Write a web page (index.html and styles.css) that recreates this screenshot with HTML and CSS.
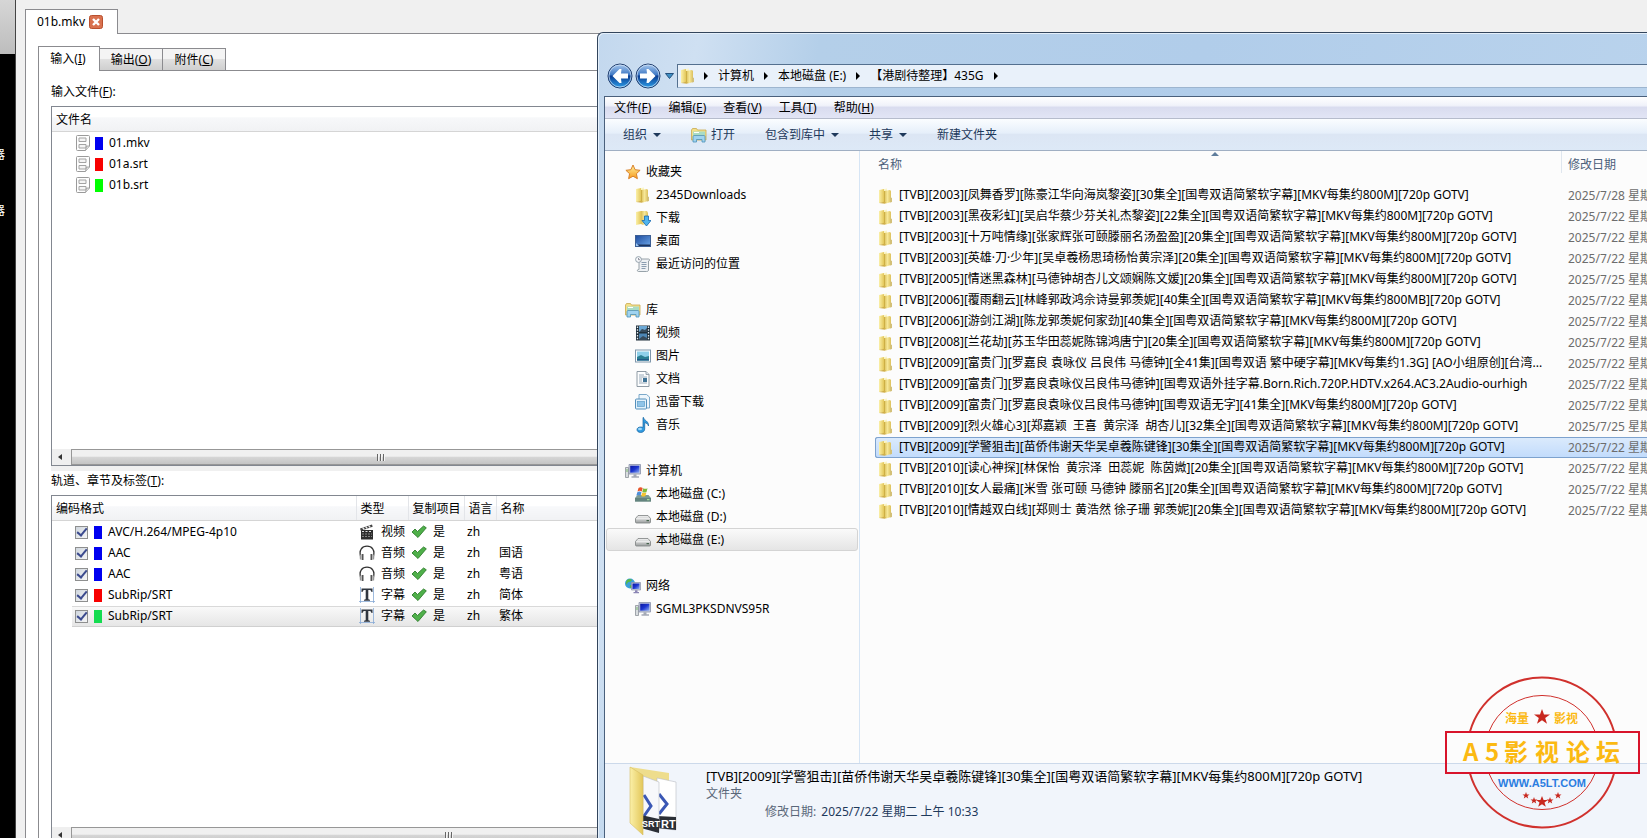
FILE: index.html
```
<!DOCTYPE html>
<html lang="zh-CN">
<head>
    <meta charset="UTF-8">
    <meta name="viewport" content="width=device-width, initial-scale=1.0">
    <title>01b.mkv</title>
    <link rel="stylesheet" href="styles.css">
</head>
<body>
    <!-- shared icons -->
    <svg class="defs" aria-hidden="true">
        <defs>
            <linearGradient id="g-fold" x1="0" x2="1"><stop offset="0" stop-color="#fbf0a8"/><stop offset="1" stop-color="#e3c75a"/></linearGradient>
            <linearGradient id="g-front" x1="0" x2="1"><stop offset="0" stop-color="#d9bd55"/><stop offset=".5" stop-color="#f6e798"/><stop offset="1" stop-color="#dcc05c"/></linearGradient>
            <linearGradient id="g-nav" x1="0" y1="0" x2="0" y2="1"><stop offset="0" stop-color="#a9c9ee"/><stop offset=".45" stop-color="#3f78c4"/><stop offset=".5" stop-color="#0b3d92"/><stop offset="1" stop-color="#2ea0ea"/></linearGradient>
            <linearGradient id="g-screen" x1="0" y1="0" x2="1" y2="1"><stop offset="0" stop-color="#0a17a0"/><stop offset=".5" stop-color="#1c35cf"/><stop offset="1" stop-color="#8fb0f5"/></linearGradient>
            <linearGradient id="g-desk" x1="0" y1="0" x2="1" y2="1"><stop offset="0" stop-color="#1d4a9c"/><stop offset="1" stop-color="#6ea8ea"/></linearGradient>
            <linearGradient id="g-star" x1="0" y1="0" x2="0" y2="1"><stop offset="0" stop-color="#fff3a0"/><stop offset="1" stop-color="#f79a1c"/></linearGradient>
            <linearGradient id="g-drive" x1="0" y1="0" x2="0" y2="1"><stop offset="0" stop-color="#f4f4f4"/><stop offset="1" stop-color="#9b9f9f"/></linearGradient>
        </defs>
        <symbol id="i-folder" viewBox="0 0 16 16">
            <path d="M1 2l5-1v13l-5 1z" fill="url(#g-fold)"/>
            <path d="M6 1l3-.5v3L6 4z" fill="#fbf5c8"/>
            <path d="M6 3l6-1 1 1v11l-5 1.500-2-1z" fill="url(#g-front)"/>
            <path d="M1 15l6 .8 1-1-2-1z" fill="#cfae48"/>
            <path d="M12 9l2 1v4l-2 .5z" fill="#d3c078"/>
            <path d="M6.500 3v11" stroke="#c9a93f" stroke-width=".8"/>
        </symbol>
        <symbol id="i-down" viewBox="0 0 16 16">
            <path d="M1 2l5-1v13l-5 1z" fill="url(#g-fold)"/>
            <path d="M6 1l6 0 1 2v10l-5 2-2-1z" fill="url(#g-front)"/>
            <path d="M9.500 6h4v4.500H16L11.500 16 7 10.500h2.500z" fill="#4fb4ee" stroke="#1568b0" stroke-width=".8"/>
        </symbol>
        <symbol id="i-star" viewBox="0 0 16 16">
            <path d="M8 1l2.100 4.700 5 .6-3.700 3.400 1 5L8 12.200 3.600 14.700l1-5L.9 6.300l5-.6z" fill="url(#g-star)" stroke="#d9822b" stroke-width="1"/>
        </symbol>
        <symbol id="i-desktop" viewBox="0 0 16 16">
            <rect x=".5" y="2.500" width="15" height="11" fill="url(#g-desk)" stroke="#3d5f94"/>
            <path d="M1 11.500h14V13H1z" fill="#1c355f"/><path d="M1 10l3 3H1z" fill="#9cc8f5"/>
        </symbol>
        <symbol id="i-recent" viewBox="0 0 16 16">
            <path d="M4 3h9.500c1.500 0 1.500 2 0 2v9c0 1.500-1.500 1.500-2 1.500H3.500c-1.500 0-1.500-2 0-2H4z" fill="#eef1f4" stroke="#8c979f" stroke-width=".9"/>
            <path d="M6.500 6.500h5M6.500 8.500h5M6.500 10.500h5M6.500 12.500h4" stroke="#7f93a8" stroke-width=".9"/>
            <circle cx="3.500" cy="3.500" r="2.900" fill="#f6f8fa" stroke="#8b98a4" stroke-width=".9"/><path d="M3.500 2v1.700h1.500" stroke="#667" fill="none" stroke-width=".7"/>
        </symbol>
        <symbol id="i-library" viewBox="0 0 16 16">
            <path d="M.5 13V3l1-1.500h4L6.500 3H15v10z" fill="#f3e08a" stroke="#c9a94e" stroke-width=".8"/>
            <path d="M2 4.500h12V8H2z" fill="#a9dcc5"/><path d="M3 5.500h5" stroke="#fff"/>
            <path d="M2 15V9.500q0-1 1-1h10q1 0 1 1V15h-3v-2.500H5.500V15z" fill="#9fd3f0" stroke="#4d92b8" stroke-width=".8"/>
        </symbol>
        <symbol id="i-video" viewBox="0 0 16 16">
            <rect x="1" y=".5" width="14" height="15" fill="#20303c"/>
            <path d="M4 1h8v6H4z" fill="#6aa7d4"/><path d="M4 8.500h8v6.500H4z" fill="#4d86b5"/>
            <path d="M4 7l3-3 3 1 2-2v4zM4 14l4-3 4 2v2H4z" fill="#374b5c"/>
            <path d="M2.500 1.500v14M13.500 1.500v14" stroke="#e9eef2" stroke-width="1.300" stroke-dasharray="1.500 1.300"/>
        </symbol>
        <symbol id="i-picture" viewBox="0 0 16 16">
            <rect x=".5" y="2" width="15" height="12" fill="#fff" stroke="#7f97ab"/>
            <path d="M2 3.500h12v9H2z" fill="#8fd0ea"/><path d="M2 9l4-2 4 2 4-1v4.500H2z" fill="#2b7f93"/><path d="M2 11h12v1.500H2z" fill="#225a86"/>
        </symbol>
        <symbol id="i-doc" viewBox="0 0 16 16">
            <path d="M2 .5h9l3 3v12H2z" fill="#fcfdfe" stroke="#84919c" stroke-width=".9"/><path d="M11 .5v3h3" fill="#dfe6ec" stroke="#84919c" stroke-width=".8"/>
            <path d="M4 4h5M4 6h8M4 8h3M4 10h3M4 12h8" stroke="#8fa0b2" stroke-width=".9"/><path d="M8 7h4v4H8z" fill="#3f7396"/>
        </symbol>
        <symbol id="i-thunder" viewBox="0 0 16 16">
            <path d="M4 5V.5h7.500l3 2.500v11H11" fill="#eef6fc" stroke="#6d9fc4" stroke-width=".9"/>
            <rect x=".5" y="5" width="11" height="10" rx="1" fill="#e2f1fb" stroke="#5590bb"/><rect x="2.500" y="7.500" width="7" height="5" fill="#8fc4e8" stroke="#5e9fc9" stroke-width=".7"/>
        </symbol>
        <symbol id="i-music" viewBox="0 0 16 16">
            <path d="M8.500.5c.5 3 5.500 3.500 5 8.500-.5-2-2-3-3.800-3.300V12c0 2-1.700 3.500-4 3.500S2 14.300 2 12.700 3.500 10 5.500 10c1.300 0 2 .2 2.500.5V.5z" fill="#2f9ae0" stroke="#15639f" stroke-width=".7"/>
            <ellipse cx="5" cy="12" rx="2" ry="1.200" fill="#9fd8fa"/>
        </symbol>
        <symbol id="i-pc" viewBox="0 0 16 16">
            <path d="M.5 4.500h3v10h-3z" fill="#d8dcdf" stroke="#8b9298" stroke-width=".8"/><path d="M1.500 6h1v3h-1z" fill="#7bb86f"/>
            <path d="M4 1.500h11.500v9.500H4z" fill="#c9cfdf" stroke="#8990a8" stroke-width=".8"/><path d="M5.200 2.700h9.200v7H5.200z" fill="url(#g-screen)"/>
            <path d="M8.500 11.300h3v2h2.500v1.500H6.500v-1.500h2z" fill="#a4a9b5"/>
        </symbol>
        <symbol id="i-sysdrive" viewBox="0 0 16 16">
            <path d="M2.500 9h11l2.500 3v3.500H0V12z" fill="#7d9b94"/><path d="M0 12h16v3.500H0z" fill="#64847f"/><path d="M12 13.200h2.500v1H12z" fill="#b6f3a4"/>
            <path d="M3.500 2q2-1.500 4.200 0L6.800 5.500q-2-1.400-4.300 0z" fill="#e8542a"/><path d="M8.300 2.300q2.200 1 4.200 0l-1 3.600q-2 1-4.200 0z" fill="#7fb83a"/>
            <path d="M2.300 6.200q2-1.400 4.200 0l-1 3.600q-2-1.400-4.200 0z" fill="#4f8fd8"/><path d="M7.200 6.500q2 1 4.200 0l-1 3.600q-2 1-4.200 0z" fill="#f4c430"/>
        </symbol>
        <symbol id="i-drive" viewBox="0 0 16 16">
            <path d="M3 6.500h10l2.500 3v3.500q0 1-1 1h-13q-1 0-1-1V9.500z" fill="url(#g-drive)" stroke="#7c8080" stroke-width=".8"/>
            <path d="M1.200 9.800h13.600" stroke="#fff" stroke-width=".8"/><path d="M11.500 11h2.500v1.200h-2.500z" fill="#45634c"/>
        </symbol>
        <symbol id="i-net" viewBox="0 0 16 16">
            <circle cx="5" cy="5.500" r="5" fill="#3aa0dc"/><path d="M2 2q3-2 5 0-1 2-3 2T2 7Q0 5 2 2zM5 7l3 1-2 2.400q-2-1-1-3.400z" fill="#57b948"/>
            <path d="M6.500 4.500h9v7.500h-9z" fill="#c9cfdf" stroke="#8990a8" stroke-width=".7"/><path d="M7.500 5.500h7v5.500h-7z" fill="url(#g-screen)"/><path d="M10 12.300h2.500V14H14v1.300H8.500V14H10z" fill="#8c86b5"/>
        </symbol>
        <symbol id="i-file" viewBox="0 0 14 16">
            <path d="M.5 1.500q0-1 1-1h11q1 0 1 1V11L9.500 15.500h-8q-1 0-1-1z" fill="#fdfdfd" stroke="#9a9a9a"/>
            <path d="M3 3h7v3.500H3zM3 9.500h7V13H3z" fill="#f4f4f4" stroke="#a3a3a3"/><path d="M13.500 11h-3l-1 4.500" fill="#ddd" stroke="#9a9a9a" stroke-width=".8"/>
        </symbol>
        <symbol id="i-clap" viewBox="0 0 16 16">
            <path d="M2 6h12v9.500H2z" fill="#2d2d2d"/><path d="M1 4.500L13 .5l.7 2.300L1.800 6.800z" fill="#444"/><path d="M3.500 3.500l1.800 2M6.500 2.500l1.800 2M9.500 1.500l1.800 2" stroke="#eee" stroke-width="1.200"/>
            <path d="M3 7.500h10" stroke="#ddd" stroke-dasharray="2 1.500"/><path d="M3 10h10M3 12.500h10" stroke="#999" stroke-width=".8" stroke-dasharray="2 1"/>
        </symbol>
        <symbol id="i-phones" viewBox="0 0 16 16">
            <path d="M1.500 10.500C0 5 3 1.200 8 1.200S16 5 14.500 10.500" fill="none" stroke="#333" stroke-width="1.300"/>
            <path d="M.5 9.500h1.800v5H.9zM15.500 9.500h-1.800v5h1.400z" fill="#999"/><path d="M2.700 9h1.800v6H2.700zM13.300 9h-1.800v6h1.800z" fill="#555"/>
        </symbol>
        <symbol id="i-text" viewBox="0 0 16 16">
            <path d="M1.500 0v16M14.500 0v16M0 14.500h16" stroke="#86a9d6" stroke-width=".8"/>
            <path d="M2.500 1.500h11V5h-1q-.3-2-1.800-2H9.300v8.800q0 .9 1.700 1v.9H5v-.9q1.700-.1 1.700-1V3H5.300q-1.500 0-1.800 2h-1z" fill="#30363f"/>
        </symbol>
        <symbol id="i-ok" viewBox="0 0 16 16">
            <path d="M1 8l3-3 2.500 2.500L12.500 2l2.800 1.800L7 13.500z" fill="#4fb04a" stroke="#2f7d2c" stroke-width=".9"/>
        </symbol>
    </svg>

    <div class="desktop">
        <div class="dock">
            <div class="dock-top"></div>
            <span class="dock-text">器</span>
            <span class="dock-text">器</span>
        </div>

        <main class="mux">
            <div class="doc-tabs">
                <button class="doc-tab">01b.mkv
                    <svg class="close" viewBox="0 0 14 14"><rect x=".5" y=".5" width="13" height="13" rx="2" fill="#d9714f" stroke="#b9502f"/><path d="M4 4l6 6M10 4l-6 6" stroke="#fff" stroke-width="2.400"/></svg>
                </button>
            </div>
            <div class="doc">
                <div class="page-tabs">
                    <button class="page-tab active">输入(<u>I</u>)</button>
                    <button class="page-tab">输出(<u>O</u>)</button>
                    <button class="page-tab">附件(<u>C</u>)</button>
                </div>
                <div class="page">
                    <h2>输入文件(<u>F</u>):</h2>
                    <section class="list inputs">
                        <table class="grid">
                            <thead><tr><th>文件名</th></tr></thead>
                            <tbody>
                                <tr><td><div class="item"><svg class="file"><use href="#i-file"/></svg><i class="swatch blue"></i>01.mkv</div></td></tr>
                                <tr><td><div class="item"><svg class="file"><use href="#i-file"/></svg><i class="swatch red"></i>01a.srt</div></td></tr>
                                <tr><td><div class="item"><svg class="file"><use href="#i-file"/></svg><i class="swatch green"></i>01b.srt</div></td></tr>
                            </tbody>
                        </table>
                        <div class="scroll"><span class="arrow-left"></span><div class="thumb"><i class="grip"></i></div></div>
                    </section>
                    <div class="splitter"></div>
                    <h2 class="tracks-title">轨道、章节及标签(<u>T</u>):</h2>
                    <section class="list tracks">
                        <table class="grid">
                            <colgroup><col class="c-codec"><col class="c-type"><col class="c-copy"><col class="c-lang"><col></colgroup>
                            <thead><tr><th>编码格式</th><th>类型</th><th>复制项目</th><th>语言</th><th>名称</th></tr></thead>
                            <tbody>
                                <tr>
                                    <td><label class="item"><input type="checkbox" checked><i class="swatch blue"></i>AVC/H.264/MPEG-4p10</label></td>
                                    <td><div class="pair"><svg><use href="#i-clap"/></svg>视频</div></td>
                                    <td><div class="pair"><svg><use href="#i-ok"/></svg>是</div></td><td>zh</td><td></td>
                                </tr>
                                <tr>
                                    <td><label class="item"><input type="checkbox" checked><i class="swatch blue"></i>AAC</label></td>
                                    <td><div class="pair"><svg><use href="#i-phones"/></svg>音频</div></td>
                                    <td><div class="pair"><svg><use href="#i-ok"/></svg>是</div></td><td>zh</td><td>国语</td>
                                </tr>
                                <tr>
                                    <td><label class="item"><input type="checkbox" checked><i class="swatch blue"></i>AAC</label></td>
                                    <td><div class="pair"><svg><use href="#i-phones"/></svg>音频</div></td>
                                    <td><div class="pair"><svg><use href="#i-ok"/></svg>是</div></td><td>zh</td><td>粤语</td>
                                </tr>
                                <tr>
                                    <td><label class="item"><input type="checkbox" checked><i class="swatch red"></i>SubRip/SRT</label></td>
                                    <td><div class="pair"><svg><use href="#i-text"/></svg>字幕</div></td>
                                    <td><div class="pair"><svg><use href="#i-ok"/></svg>是</div></td><td>zh</td><td>简体</td>
                                </tr>
                                <tr class="current">
                                    <td><label class="item"><input type="checkbox" checked><i class="swatch mint"></i>SubRip/SRT</label></td>
                                    <td><div class="pair"><svg><use href="#i-text"/></svg>字幕</div></td>
                                    <td><div class="pair"><svg><use href="#i-ok"/></svg>是</div></td><td>zh</td><td>繁体</td>
                                </tr>
                            </tbody>
                        </table>
                        <div class="scroll"><span class="arrow-left"></span><div class="thumb wide"><i class="grip"></i></div></div>
                    </section>
                </div>
            </div>
        </main>

        <!-- explorer window on top of the muxer -->
        <div class="explorer">
            <div class="titlebar">
                <button class="nav-btn" aria-label="后退"><svg viewBox="0 0 26 26"><circle cx="13" cy="13" r="12" fill="url(#g-nav)" stroke="#24406f"/><circle cx="13" cy="13" r="11" fill="none" stroke="#d5e5f7" stroke-opacity=".7"/><path d="M5.500 13l7-7h2l-.5 4.500h7v5h-7l.5 4.500h-2z" fill="#fff"/></svg></button>
                <button class="nav-btn" aria-label="前进"><svg viewBox="0 0 26 26"><circle cx="13" cy="13" r="12" fill="url(#g-nav)" stroke="#24406f"/><circle cx="13" cy="13" r="11" fill="none" stroke="#d5e5f7" stroke-opacity=".7"/><path d="M20.500 13l-7-7h-2l.5 4.500H5v5h7l-.5 4.500h2z" fill="#fff"/></svg></button>
                <svg class="recent" viewBox="0 0 9 6"><path d="M.5.5h8l-4 5z" fill="#3d8fc4" stroke="#24507d"/></svg>
                <nav class="address">
                    <svg><use href="#i-folder"/></svg>
                    <i class="tri"></i><a href="#">计算机</a>
                    <i class="tri"></i><a href="#">本地磁盘 (E:)</a>
                    <i class="tri"></i><a href="#">【港剧待整理】435G</a>
                    <i class="tri"></i>
                </nav>
            </div>
            <div class="client">
                <div class="menubar">
                    <button>文件(<u>F</u>)</button><button>编辑(<u>E</u>)</button><button>查看(<u>V</u>)</button><button>工具(<u>T</u>)</button><button>帮助(<u>H</u>)</button>
                </div>
                <div class="toolbar">
                    <button>组织<i class="caret"></i></button>
                    <button class="open"><svg><use href="#i-library"/></svg>打开</button>
                    <button>包含到库中<i class="caret"></i></button>
                    <button>共享<i class="caret"></i></button>
                    <button>新建文件夹</button>
                </div>
                <div class="body">
                    <nav class="tree">
                        <ul>
                            <li><a class="root" href="#"><svg><use href="#i-star"/></svg>收藏夹</a></li>
                            <li><a href="#"><svg><use href="#i-folder"/></svg>2345Downloads</a></li>
                            <li><a href="#"><svg><use href="#i-down"/></svg>下载</a></li>
                            <li><a href="#"><svg><use href="#i-desktop"/></svg>桌面</a></li>
                            <li><a href="#"><svg><use href="#i-recent"/></svg>最近访问的位置</a></li>
                        </ul>
                        <ul>
                            <li><a class="root" href="#"><svg><use href="#i-library"/></svg>库</a></li>
                            <li><a href="#"><svg><use href="#i-video"/></svg>视频</a></li>
                            <li><a href="#"><svg><use href="#i-picture"/></svg>图片</a></li>
                            <li><a href="#"><svg><use href="#i-doc"/></svg>文档</a></li>
                            <li><a href="#"><svg><use href="#i-thunder"/></svg>迅雷下载</a></li>
                            <li><a href="#"><svg><use href="#i-music"/></svg>音乐</a></li>
                        </ul>
                        <ul>
                            <li><a class="root" href="#"><svg><use href="#i-pc"/></svg>计算机</a></li>
                            <li><a href="#"><svg><use href="#i-sysdrive"/></svg>本地磁盘 (C:)</a></li>
                            <li><a href="#"><svg><use href="#i-drive"/></svg>本地磁盘 (D:)</a></li>
                            <li><a class="here" href="#"><svg><use href="#i-drive"/></svg>本地磁盘 (E:)</a></li>
                        </ul>
                        <ul>
                            <li><a class="root" href="#"><svg><use href="#i-net"/></svg>网络</a></li>
                            <li><a href="#"><svg><use href="#i-pc"/></svg>SGML3PKSDNVS95R</a></li>
                        </ul>
                    </nav>
                    <div class="files">
                        <table>
                            <colgroup><col class="c-name"><col></colgroup>
                            <thead><tr><th>名称<i class="sort"></i></th><th class="date-head">修改日期</th></tr></thead>
                            <tbody>
                                <tr><td><svg><use href="#i-folder"/></svg>[TVB][2003][凤舞香罗][陈豪江华向海岚黎姿][30集全][国粤双语简繁软字幕][MKV每集约800M][720p GOTV]</td><td>2025/7/28 星期一</td></tr>
                                <tr><td><svg><use href="#i-folder"/></svg>[TVB][2003][黑夜彩虹][吴启华蔡少芬关礼杰黎姿][22集全][国粤双语简繁软字幕][MKV每集约800M][720p GOTV]</td><td>2025/7/22 星期二</td></tr>
                                <tr><td><svg><use href="#i-folder"/></svg>[TVB][2003][十万吨情缘][张家辉张可颐滕丽名汤盈盈][20集全][国粤双语简繁软字幕][MKV每集约800M][720p GOTV]</td><td>2025/7/22 星期二</td></tr>
                                <tr><td><svg><use href="#i-folder"/></svg>[TVB][2003][英雄·刀·少年][吴卓羲杨思琦杨怡黄宗泽][20集全][国粤双语简繁软字幕][MKV每集约800M][720p GOTV]</td><td>2025/7/22 星期二</td></tr>
                                <tr><td><svg><use href="#i-folder"/></svg>[TVB][2005][情迷黑森林][马德钟胡杏儿文颂娴陈文媛][20集全][国粤双语简繁软字幕][MKV每集约800M][720p GOTV]</td><td>2025/7/25 星期五</td></tr>
                                <tr><td><svg><use href="#i-folder"/></svg>[TVB][2006][覆雨翻云][林峰郭政鸿佘诗曼郭羡妮][40集全][国粤双语简繁软字幕][MKV每集约800MB][720p GOTV]</td><td>2025/7/22 星期二</td></tr>
                                <tr><td><svg><use href="#i-folder"/></svg>[TVB][2006][游剑江湖][陈龙郭羡妮何家劲][40集全][国粤双语简繁软字幕][MKV每集约800M][720p GOTV]</td><td>2025/7/22 星期二</td></tr>
                                <tr><td><svg><use href="#i-folder"/></svg>[TVB][2008][兰花劫][苏玉华田蕊妮陈锦鸿唐宁][20集全][国粤双语简繁软字幕][MKV每集约800M][720p GOTV]</td><td>2025/7/22 星期二</td></tr>
                                <tr><td><svg><use href="#i-folder"/></svg>[TVB][2009][富贵门][罗嘉良 袁咏仪 吕良伟 马德钟][全41集][国粤双语 繁中硬字幕][MKV每集约1.3G] [AO小组原创][台湾...</td><td>2025/7/22 星期二</td></tr>
                                <tr><td><svg><use href="#i-folder"/></svg>[TVB][2009][富贵门][罗嘉良袁咏仪吕良伟马德钟][国粤双语外挂字幕.Born.Rich.720P.HDTV.x264.AC3.2Audio-ourhigh</td><td>2025/7/22 星期二</td></tr>
                                <tr><td><svg><use href="#i-folder"/></svg>[TVB][2009][富贵门][罗嘉良袁咏仪吕良伟马德钟][国粤双语无字][41集全][MKV每集约800M][720p GOTV]</td><td>2025/7/22 星期二</td></tr>
                                <tr><td><svg><use href="#i-folder"/></svg>[TVB][2009][烈火雄心3][郑嘉颖  王喜  黄宗泽  胡杏儿][32集全][国粤双语简繁软字幕][MKV每集约800M][720p GOTV]</td><td>2025/7/25 星期五</td></tr>
                                <tr class="selected"><td><svg><use href="#i-folder"/></svg>[TVB][2009][学警狙击][苗侨伟谢天华吴卓羲陈键锋][30集全][国粤双语简繁软字幕][MKV每集约800M][720p GOTV]</td><td>2025/7/22 星期二</td></tr>
                                <tr><td><svg><use href="#i-folder"/></svg>[TVB][2010][读心神探][林保怡  黄宗泽  田蕊妮  陈茵媺][20集全][国粤双语简繁软字幕][MKV每集约800M][720p GOTV]</td><td>2025/7/22 星期二</td></tr>
                                <tr><td><svg><use href="#i-folder"/></svg>[TVB][2010][女人最痛][米雪 张可颐 马德钟 滕丽名][20集全][国粤双语简繁软字幕][MKV每集约800M][720p GOTV]</td><td>2025/7/22 星期二</td></tr>
                                <tr><td><svg><use href="#i-folder"/></svg>[TVB][2010][情越双白线][郑则士 黄浩然 徐子珊 郭羡妮][20集全][国粤双语简繁软字幕][MKV每集约800M][720p GOTV]</td><td>2025/7/22 星期二</td></tr>
                            </tbody>
                        </table>
                    </div>
                </div>
                <footer class="details">
                    <svg class="preview" viewBox="0 0 48 70">
                        <path d="M1 1l39 6v12L14 62z" fill="#eedd8c"/>
                        <path d="M28 12l19 4v48l-19-2z" fill="#fff" stroke="#b9bcc4" stroke-width=".6"/>
                        <path d="M30 28l8 10-8 10" fill="none" stroke="#3b58b5" stroke-width="3"/>
                        <path d="M28 50l19 1v13l-19-2z" fill="#2b2f36"/>
                        <text x="32" y="62" class="srt">RT</text>
                        <path d="M14 10l16 6v50l-16-5z" fill="#f7f8fb" stroke="#b9bcc4" stroke-width=".6"/>
                        <path d="M15 29l7 11-7 10" fill="none" stroke="#3b58b5" stroke-width="3"/>
                        <path d="M12 49l18 4v14l-18-5z" fill="#2b2f36"/>
                        <path d="M1 1l13 8v60L1 57z" fill="url(#g-fold)" stroke="#d6bd62" stroke-width=".6"/>
                        <text x="13" y="61" class="srt small">SRT</text>
                    </svg>
                    <div class="info">
                        <strong>[TVB][2009][学警狙击][苗侨伟谢天华吴卓羲陈键锋][30集全][国粤双语简繁软字幕][MKV每集约800M][720p GOTV]</strong>
                        <span class="kind">文件夹</span>
                        <span class="when"><span>修改日期:</span> 2025/7/22 星期二 上午 10:33</span>
                    </div>
                </footer>
            </div>
        </div>

        <!-- forum stamp -->
        <svg class="stamp" viewBox="0 0 196 154">
            <g fill="none" stroke="#d0312d">
                <path d="M26 56.500a75 75 0 0 1 144 0M26 98.500a75 75 0 0 0 144 0" stroke-width="2"/>
                <path d="M45 56.500a57 57 0 0 1 106 0M45 98.500a57 57 0 0 0 106 0" stroke-width="1"/>
                <rect x="2" y="57" width="193" height="41" stroke="#d8142b" stroke-width="2"/>
            </g>
            <g fill="#c8281f">
                <path d="M98 34l2 5.500h6l-4.800 3.600 1.800 5.700-5-3.500-5 3.500 1.800-5.700L90 39.500h6z"/>
                <path d="M98 121l1.600 4h4.300l-3.400 2.600 1.300 4.100-3.800-2.500-3.800 2.500 1.300-4.100-3.400-2.600h4.300z"/>
                <path d="M82 117l.9 2.400h2.600l-2 1.500.7 2.500-2.200-1.500-2.200 1.500.7-2.500-2-1.500h2.600zM90 122l.9 2.400h2.600l-2 1.500.7 2.500-2.200-1.500-2.200 1.500.7-2.500-2-1.500h2.600zM106 122l.9 2.400h2.600l-2 1.500.7 2.500-2.200-1.500-2.200 1.500.7-2.500-2-1.500h2.600zM114 117l.9 2.400h2.600l-2 1.500.7 2.500-2.200-1.500-2.200 1.500.7-2.500-2-1.500h2.600z"/>
            </g>
            <text class="stamp-small" x="61" y="48">海量</text>
            <text class="stamp-small" x="110" y="48">影视</text>
            <text class="stamp-big" x="19 41 60 91 122 152" y="86">A5影视论坛</text>
            <text class="stamp-url" x="98" y="112" text-anchor="middle">WWW.A5LT.COM</text>
        </svg>
    </div>
</body>
</html>
```
FILE: styles.css
```
* {
    box-sizing: border-box;
}
body {
    margin: 0;
    font-family: "Noto Sans", "Noto Sans CJK SC", sans-serif;
    font-size: 12px;
    line-height: 16px;
    color: #000;
}
button {
    font: inherit;
    color: inherit;
    background: none;
    border: none;
    padding: 0;
    margin: 0;
    white-space: nowrap;
}
a {
    color: inherit;
    text-decoration: none;
}
svg {
    width: 16px;
    height: 16px;
    flex: none;
}
table {
    border-collapse: collapse;
    table-layout: fixed;
    width: 100%;
}
th {
    font-weight: normal;
    text-align: left;
}
.defs {
    position: absolute;
    width: 0;
    height: 0;
}
.desktop {
    position: relative;
    display: flex;
    height: 100vh;
    overflow: hidden;
    background-color: #f0f0f0;
}

/* black strip on the left */
.dock {
    width: 16px;
    flex: none;
    background-color: #000;
    border-right: 1px solid #444;
}
.dock-top {
    height: 54px;
    background: linear-gradient(#d6d6d6, #bdbdbd);
    margin-bottom: 93px;
}
.dock-text {
    display: flex;
    justify-content: flex-end;
    width: 5px;
    height: 16px;
    margin-bottom: 40px;
    overflow: hidden;
    color: #fff;
}

/* muxer */
.mux {
    flex: 1;
    min-width: 0;
    display: flex;
    flex-direction: column;
    padding: 9px 0 0 9px;
}
.doc-tabs {
    display: flex;
    height: 25px;
    margin-bottom: -1px;
}
.doc-tab {
    display: flex;
    align-items: center;
    gap: 4px;
    width: 93px;
    padding-left: 11px;
    background-color: #fff;
    border: 1px solid #8b8b8f;
    border-bottom: none;
    z-index: 1;
}
.close {
    width: 14px;
    height: 14px;
}
.doc {
    flex: 1;
    min-height: 0;
    display: flex;
    flex-direction: column;
    padding: 12px 0 0 12px;
    background-color: #fff;
    border: 1px solid #8b8b8f;
    border-right: none;
    border-bottom: none;
}
.page-tabs {
    display: flex;
    align-items: flex-end;
    height: 25px;
    margin-bottom: -1px;
}
.page-tab {
    height: 23px;
    width: 63px;
    border: 1px solid #8b8b8f;
    border-left: none;
    background: linear-gradient(#f4f4f4 45%, #e0e0e0 50%, #cfcfcf);
}
.page-tab.active {
    height: 25px;
    width: 62px;
    padding-right: 2px;
    border-left: 1px solid #8b8b8f;
    border-bottom: none;
    background: #fff;
    z-index: 1;
}
.page {
    flex: 1;
    min-height: 0;
    display: flex;
    flex-direction: column;
    padding: 13px 0 0 12px;
    border: 1px solid #8b8b8f;
    border-right: none;
    border-bottom: none;
}
h2 {
    margin: 0 0 6px;
    font-size: 12px;
    font-weight: normal;
}
.list {
    display: flex;
    flex-direction: column;
    border: 1px solid #828790;
    border-right: none;
}
.inputs {
    height: 360px;
}
.tracks {
    flex: 1;
    min-height: 0;
    border-bottom: none;
}
.splitter {
    height: 5px;
    margin-bottom: 2px;
    background-color: #f0f0f0;
}
.grid th {
    height: 24px;
    padding: 2px 4px 0;
    background: linear-gradient(#fff 40%, #f7f8fa 45%, #f1f2f4);
    border-bottom: 1px solid #d5d5d5;
    border-right: 1px solid #e3e5e9;
    white-space: nowrap;
}
.grid th:last-child {
    border-right: none;
}
.grid tbody::before {
    content: "";
    display: block;
    height: 1px;
}
.grid td {
    height: 21px;
    padding: 0 3px;
    white-space: nowrap;
}
.grid td:first-child {
    padding: 0 0 0 20px;
}
.inputs .item {
    padding-left: 4px;
}
.item {
    display: flex;
    align-items: center;
    padding-left: 3px;
}
.item input {
    appearance: none;
    width: 13px;
    height: 13px;
    margin: 0 6px 0 0;
    border: 1px solid #8e8f8f;
    background: linear-gradient(135deg, #cfd6de, #f6f6f6);
    display: grid;
    place-items: center;
}
.item input:checked::before {
    content: "";
    width: 4px;
    height: 8px;
    margin-top: -2px;
    border: solid #3b4a8e;
    border-width: 0 2px 2px 0;
    transform: rotate(40deg);
}
.item .file {
    width: 14px;
    margin-right: 5px;
}
.swatch {
    width: 8px;
    height: 13px;
    margin-right: 6px;
}
.blue { background-color: #0000f0; }
.red { background-color: #f80000; }
.green { background-color: #00ff00; }
.mint { background-color: #14dc50; }
.pair {
    display: flex;
    align-items: center;
    gap: 6px;
}
.c-codec { width: 304px; }
.c-type { width: 52px; }
.c-copy { width: 56px; }
.c-lang { width: 32px; }
.current td {
    background: linear-gradient(#d9d9d9 1px, #f9f9f9 1px, #e6e6e6 20px, #d0d0d0 20px) content-box;
}
.current td:not(:first-child) {
    background-clip: border-box;
    background-origin: border-box;
}
.scroll {
    display: flex;
    align-items: center;
    height: 16px;
    margin-top: auto;
    background-color: #efefef;
}
.tracks .scroll {
    margin-bottom: -5px;
}
.arrow-left {
    margin: 0 9px 0 6px;
    border: 3px solid transparent;
    border-right: 4px solid #333;
    border-left: none;
}
.thumb {
    display: flex;
    align-items: center;
    justify-content: center;
    width: 620px;
    height: 16px;
    border: 1px solid #979797;
    background: linear-gradient(#f0f0f0 45%, #d6d6d6 50%, #c4c4c4);
}
.thumb.wide {
    width: 756px;
}
.grip {
    width: 8px;
    height: 7px;
    background: repeating-linear-gradient(90deg, #666 0 1px, #f4f4f4 1px 2px, transparent 2px 3px);
}

/* explorer */
.explorer {
    position: absolute;
    top: 32px;
    right: 0;
    bottom: 0;
    left: 597px;
    display: flex;
    flex-direction: column;
    padding-left: 6px;
    border: 1px solid #33455c;
    border-width: 1px 0 0 1px;
    border-top-left-radius: 6px;
    background: linear-gradient(100deg, #c3d8ee 0, #cfe0f2 100px, #b4cfe9 220px, #b1cdea 600px, #bbd4ed);
    box-shadow: inset 1px 1px 0 #e4effa;
}
.titlebar {
    display: flex;
    align-items: center;
    gap: 2px;
    padding: 30px 0 7px 3px;
}
.nav-btn, .nav-btn svg {
    display: block;
    width: 26px;
    height: 26px;
}
.titlebar .recent {
    width: 9px;
    height: 6px;
    margin: 0 1px 0 2px;
}
.address {
    flex: 1;
    display: flex;
    align-items: center;
    height: 24px;
    padding-left: 2px;
    border: 1px solid #54708f;
    border-right: none;
    border-bottom-color: #9db5cf;
    background-color: #e9f1fa;
    white-space: nowrap;
}
.tri {
    margin: 0 10px;
    border: 4px solid transparent;
    border-left: 4px solid #000;
    border-right: none;
}
.address svg + .tri {
    margin-left: 8px;
}
.client {
    flex: 1;
    min-height: 0;
    display: flex;
    flex-direction: column;
    border: 1px solid #4a607c;
    border-width: 1px 0 0 1px;
    background-color: #fcfcfc;
}
.menubar {
    display: flex;
    gap: 17px;
    height: 22px;
    padding-left: 9px;
    background: linear-gradient(#fff, #f0f2fa 40%, #d9dcef 50%, #e2e5f5);
    border-bottom: 1px solid #b6bccc;
}
.toolbar {
    display: flex;
    align-items: center;
    gap: 30px;
    height: 32px;
    padding-left: 18px;
    background: linear-gradient(#fbfdff, #e6effa 45%, #dce6f4 50%, #dde9f7);
    border-bottom: 1px solid #a0afc3;
    color: #1e395b;
}
.toolbar button {
    display: flex;
    align-items: center;
    gap: 6px;
}
.toolbar .open {
    gap: 4px;
}
.caret {
    border: 4px solid transparent;
    border-top: 4px solid #1e395b;
    border-bottom: none;
}
.body {
    flex: 1;
    min-height: 0;
    display: flex;
}
.tree {
    width: 255px;
    flex: none;
    padding: 9px 1px 0;
    border-right: 1px solid #d6e5f5;
}
.tree ul {
    list-style: none;
    margin: 0 0 23px;
    padding: 0;
}
.tree a {
    display: flex;
    align-items: center;
    gap: 5px;
    height: 23px;
    padding-left: 28px;
    border: 1px solid transparent;
    border-radius: 3px;
}
.tree .root {
    padding-left: 18px;
}
.tree .here {
    border-color: #d4d4d4;
    background: linear-gradient(#fafafa, #e5e5e5);
}
.files {
    flex: 1;
    min-width: 0;
    padding-left: 15px;
    overflow: hidden;
}
.c-name {
    width: 686px;
}
.files th {
    position: relative;
    height: 34px;
    padding: 0 3px 7px;
    color: #4c607a;
}
.files .date-head {
    padding-left: 7px;
    background: linear-gradient(#dfe6ee, #dfe6ee) no-repeat left top / 1px 22px;
}
.sort {
    position: absolute;
    top: 1px;
    left: 49%;
    border: 4px solid transparent;
    border-bottom: 4px solid #5f7d9c;
    border-top: none;
}
.files td {
    height: 21px;
    padding: 0 0 0 3px;
    white-space: pre;
    overflow: hidden;
}
.files td svg {
    vertical-align: middle;
    margin-right: 5px;
}
.files td:last-child {
    padding-left: 7px;
    color: #6d6d6d;
}
.selected td {
    background: linear-gradient(#dcebfc, #c1dbfc);
    box-shadow: inset 0 1px #7da2ce, inset 0 -1px #7da2ce;
}
.selected td:first-child {
    border-radius: 3px 0 0 3px;
    box-shadow: inset 0 1px #7da2ce, inset 0 -1px #7da2ce, inset 1px 0 #7da2ce;
}
.details {
    display: flex;
    height: 75px;
    flex: none;
    padding: 2px 0 0 24px;
    background-color: #f1f5fb;
    border-top: 1px solid #ccd9ea;
}
.details .preview {
    width: 48px;
    height: 70px;
    margin-right: 29px;
}
.srt {
    font: bold 11px "Liberation Sans", sans-serif;
    fill: #fff;
}
.srt.small {
    font-size: 9px;
}
.info {
    display: flex;
    flex-direction: column;
    gap: 2px;
    padding-top: 2px;
    white-space: nowrap;
}
.info strong {
    font-size: 13px;
    font-weight: normal;
}
.kind {
    color: #5a6779;
}
.when {
    padding-left: 59px;
    color: #1e395b;
}
.when span {
    color: #5a6779;
    margin-right: 2px;
}

.stamp {
    position: absolute;
    right: 7px;
    bottom: 9px;
    width: 196px;
    height: 154px;
}
.stamp text {
    font-family: "Noto Sans CJK SC", sans-serif;
    font-weight: bold;
    fill: #fbb912;
}
.stamp .stamp-small {
    font-size: 12px;
}
.stamp .stamp-big {
    font-size: 24px;
}
.stamp .stamp-url {
    font-family: "Liberation Sans", sans-serif;
    font-size: 11px;
    fill: #2a7de1;
}
```
